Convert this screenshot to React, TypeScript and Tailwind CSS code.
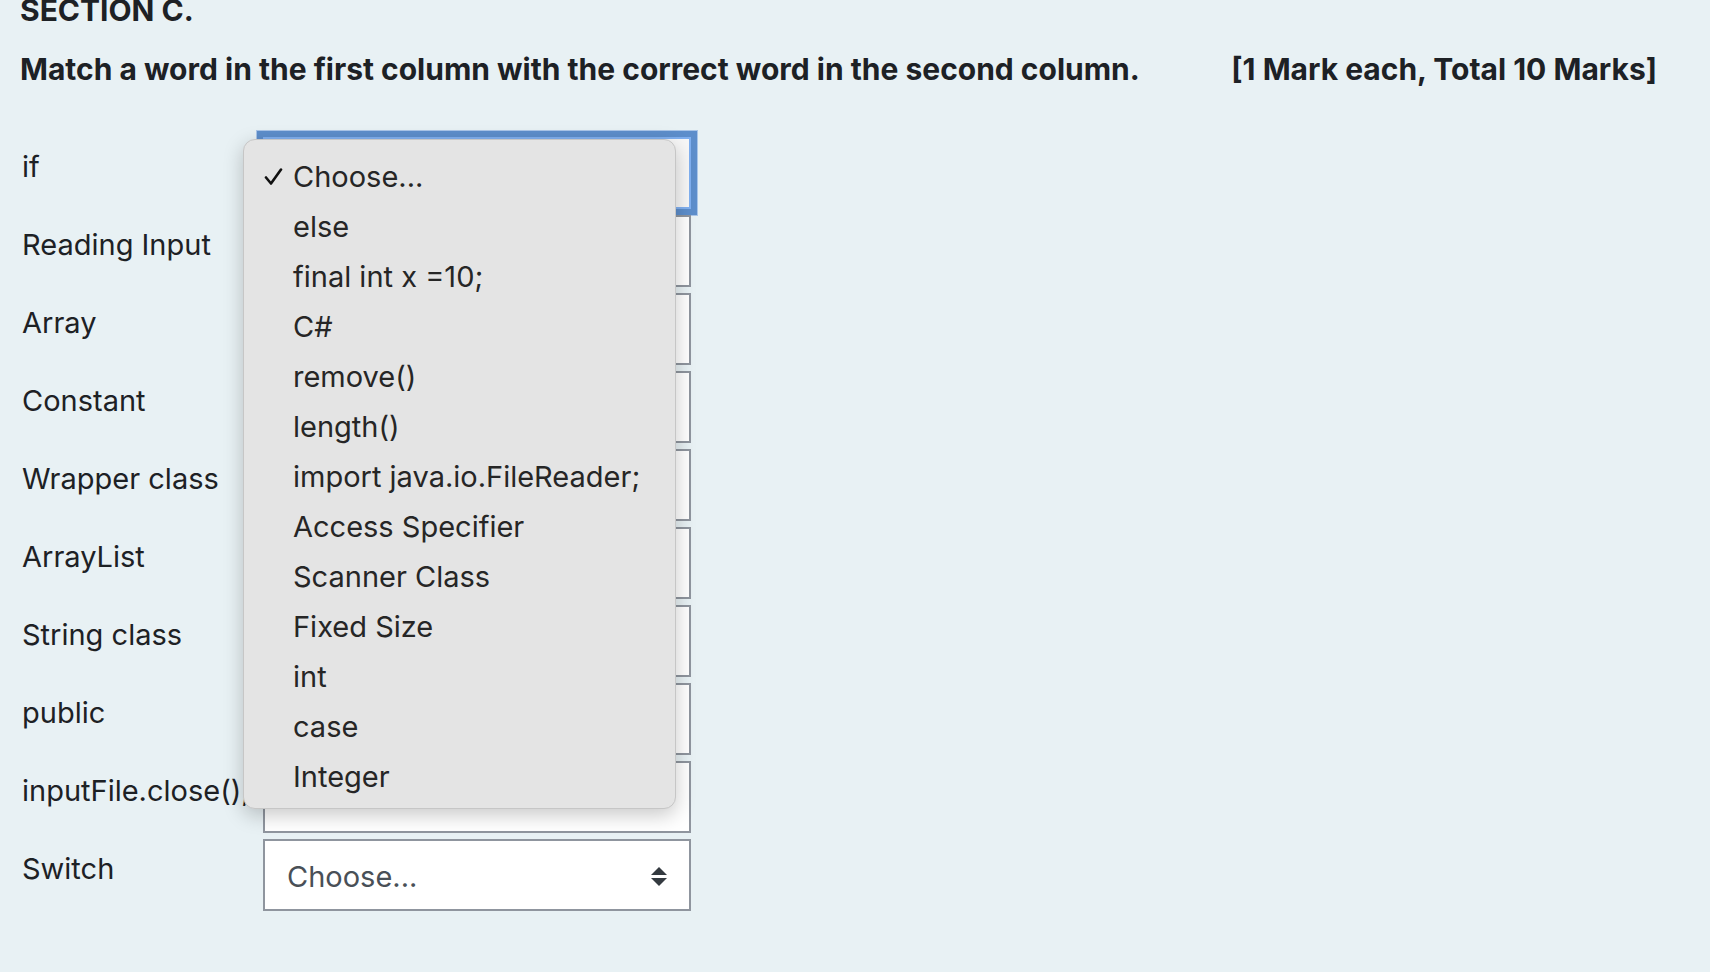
import React from 'react';

/** 左の列の語句 */
const LEFT_WORDS = [
  'if',
  'Reading Input',
  'Array',
  'Constant',
  'Wrapper class',
  'ArrayList',
  'String class',
  'public',
  'inputFile.close();',
  'Switch',
];

/** 開いている選択肢メニューの中身 */
const OPTIONS = [
  'Choose...',
  'else',
  'final int x =10;',
  'C#',
  'remove()',
  'length()',
  'import java.io.FileReader;',
  'Access Specifier',
  'Scanner Class',
  'Fixed Size',
  'int',
  'case',
  'Integer',
];

const UpDownArrows = () => (
  <svg width="16" height="20" viewBox="0 0 16 20" className="shrink-0">
    <path d="M8 0 L16 8 L0 8 Z" fill="#343a40" />
    <path d="M0 11 L16 11 L8 19 Z" fill="#343a40" />
  </svg>
);

const Check = () => (
  <svg width="19" height="18" viewBox="0 0 19 18" className="shrink-0">
    <path
      d="M2 9.5 L7 15.5 L17 1.5"
      fill="none"
      stroke="#111"
      strokeWidth="2.6"
      strokeLinecap="round"
      strokeLinejoin="round"
    />
  </svg>
);

const App: React.FC = () => {
  return (
    <div className="h-[972px] w-full overflow-hidden bg-[#e8f1f4] font-['Inter','Roboto',sans-serif] text-[#1d2125]">
      {/* 見出し */}
      <div className="pl-[20px] pr-[53px]">
        <h3 className="-mt-[8px] text-[30px] font-bold leading-[36px]">SECTION C.</h3>
        <div className="mt-[23px] flex justify-between text-[30px] font-bold leading-[36px]">
          <span>Match a word in the first column with the correct word in the second column.</span>
          <span>[1 Mark each, Total 10 Marks]</span>
        </div>
      </div>

      {/* 対応付けの行 */}
      <div className="relative mt-[50px]">
        <div className="flex flex-col gap-[6px]">
          {LEFT_WORDS.map((word, index) => (
            <div key={word} className="flex items-start">
              <div className="w-[263px] pl-[22px] pt-[12px] text-[29px] leading-[35px]">{word}</div>
              <div
                className={
                  index === 0
                    ? 'flex h-[72px] w-[428px] items-center justify-between border-2 border-[#80b0f0] bg-[#f7f7f7] px-[22px] shadow-[0_0_0_6px_#5d8ecb,0_0_0_7px_#a9c5e8]'
                    : 'flex h-[72px] w-[428px] items-center justify-between border-2 border-[#8f959e] bg-white px-[22px] pt-[4px]'
                }
              >
                <span className="text-[29px] text-[#495057]">Choose...</span>
                <UpDownArrows />
              </div>
            </div>
          ))}
        </div>

        {/* 開いたドロップダウン */}
        <div className="absolute left-[243px] top-[2px] w-[433px] rounded-[12px] border border-[#c6c6c6] bg-[#e4e4e4] pt-[12px] pb-[6px] shadow-[0_6px_20px_rgba(0,0,0,0.22)]">
          {OPTIONS.map((opt, index) => (
            <div key={opt} className="flex h-[50px] items-center text-[29px] text-[#262626]">
              <div className="flex w-[49px] justify-end pr-[10px]">{index === 0 && <Check />}</div>
              <span>{opt}</span>
            </div>
          ))}
        </div>
      </div>
    </div>
  );
};

export default App;
